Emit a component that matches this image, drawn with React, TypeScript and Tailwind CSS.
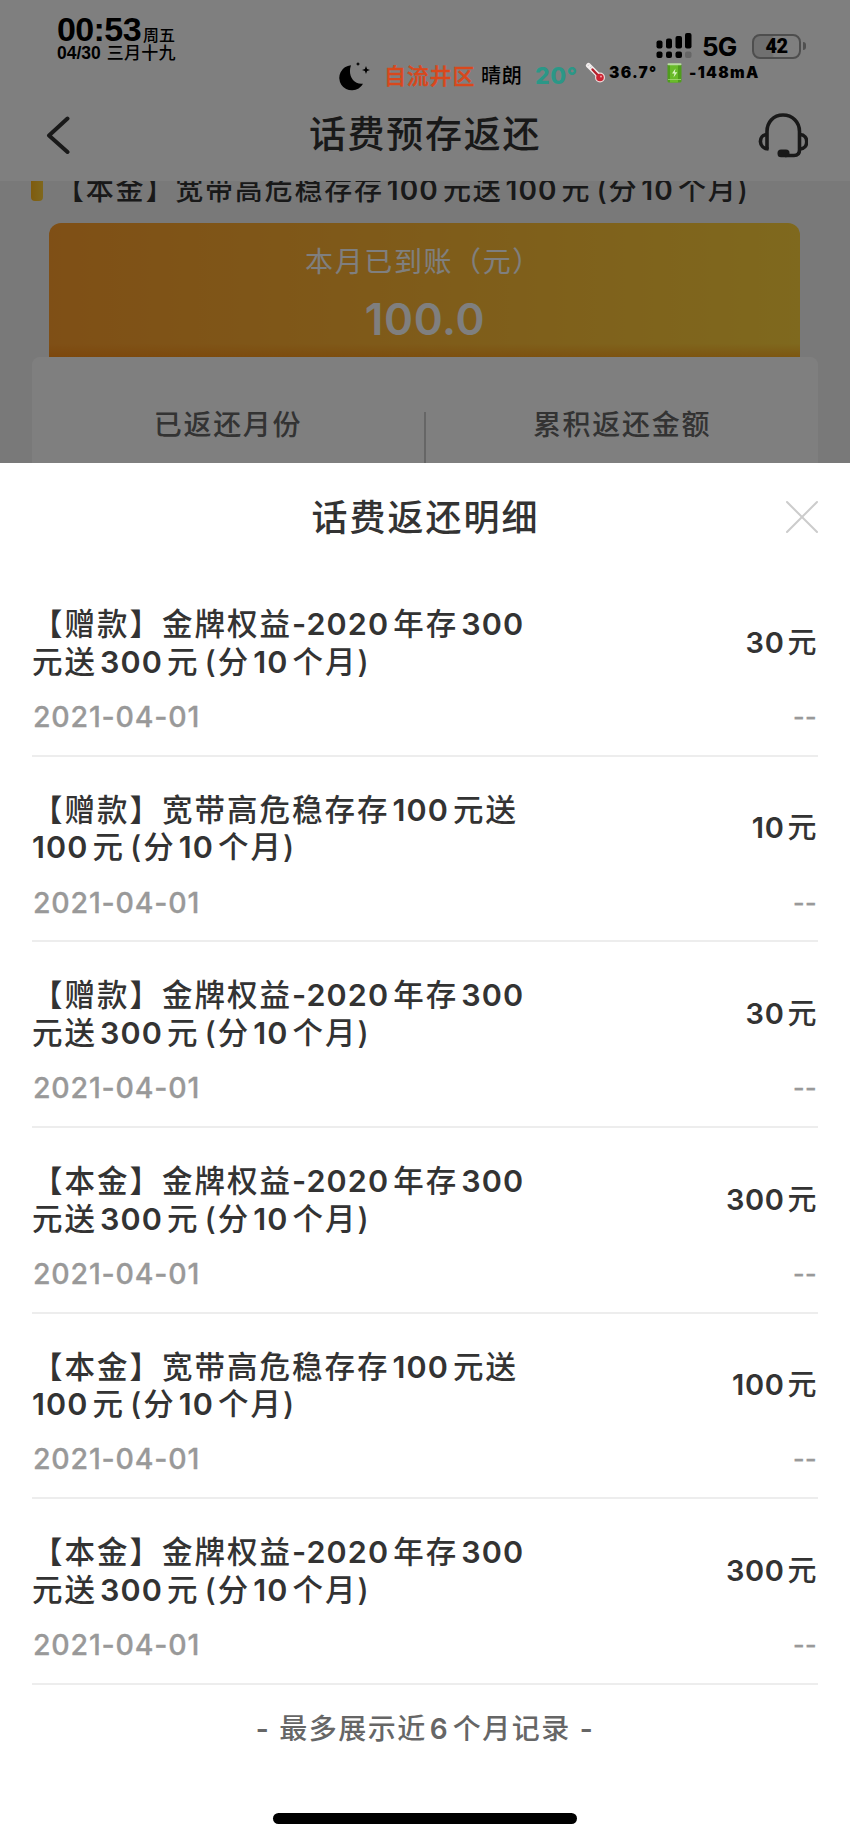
import type React from "react";

type RefundItem = {
  title: [string, string];
  date: string;
  amount: string;
};

const GIFT_300: [string, string] = ["【赠款】金牌权益-2020年存300", "元送300元(分10个月)"];
const BASE_300: [string, string] = ["【本金】金牌权益-2020年存300", "元送300元(分10个月)"];

const ITEMS: RefundItem[] = [
  { title: GIFT_300, date: "2021-04-01", amount: "30" },
  { title: ["【赠款】宽带高危稳存存100元送", "100元(分10个月)"], date: "2021-04-01", amount: "10" },
  { title: GIFT_300, date: "2021-04-01", amount: "30" },
  { title: BASE_300, date: "2021-04-01", amount: "300" },
  { title: ["【本金】宽带高危稳存存100元送", "100元(分10个月)"], date: "2021-04-01", amount: "100" },
  { title: BASE_300, date: "2021-04-01", amount: "300" },
];

// puts a little air between latin digits and the chinese characters around them
function Mixed({ text }: { text: string }): React.ReactElement {
  const parts = text.split(/(-?[0-9]+|\()/).filter(Boolean);
  return (
    <>
      {parts.map((p, i) => {
        if (p === "(") return <span key={i} className="ml-[5px]">{p}</span>;
        if (!/[0-9]/.test(p)) return <span key={i}>{p}</span>;
        const gap = i > 0 && !p.startsWith("-");
        return (
          <span key={i} className={`mr-[4px] font-semibold tracking-[1.100px] ${gap ? "ml-[3px]" : ""}`}>
            {p}
          </span>
        );
      })}
    </>
  );
}

function SignalIcon() {
  return (
    <svg width="36" height="26" viewBox="0 0 36 26">
      <rect x="0.5" y="7.5" width="6" height="8" rx="2" />
      <rect x="10" y="5.5" width="6" height="10" rx="2" />
      <rect x="19.5" y="3" width="6.5" height="12.5" rx="2" />
      <rect x="29" y="0" width="6.5" height="15.5" rx="2" />
      <rect x="0.5" y="18.5" width="6" height="6.5" rx="2" />
      <rect x="10" y="18.5" width="6" height="6.5" rx="2" />
      <rect x="19.5" y="18.5" width="6.5" height="6.5" rx="2" />
      <rect x="29" y="18.5" width="6.5" height="6.5" rx="2" fill="#666" />
    </svg>
  );
}

function MoonIcon() {
  return (
    <svg width="31" height="29" viewBox="0 0 31 29">
      <path d="M12 3.2A12.6 12.6 0 1 0 24 21.7C14 23 8.500 12.500 12 3.200Z" />
      <path d="M27 4 L28.100 6.900 L31 8 L28.100 9.100 L27 12 L25.900 9.100 L23 8 L25.900 6.900Z" />
      <path d="M19 0 L19.700 1.300 L21 2 L19.700 2.700 L19 4 L18.300 2.700 L17 2 L18.300 1.300Z" />
    </svg>
  );
}

function ThermometerIcon() {
  return (
    <svg width="21" height="21" viewBox="0 0 21 21">
      <path d="M3.500 3.500 L14 14" stroke="#f3eeee" strokeWidth="5" strokeLinecap="round" />
      <circle cx="15" cy="15.500" r="5" fill="#f1dada" />
      <path d="M7.500 7.500 L14 14.500" stroke="#b3202c" strokeWidth="2.400" strokeLinecap="round" />
      <circle cx="15" cy="15.500" r="3.800" fill="#cc2433" />
      <circle cx="16" cy="14.500" r="1" fill="#f4a0a5" />
      <path d="M4 2.500 L2.800 4 M6.400 4.600 L5.200 6" stroke="#bbb" strokeWidth="0.8" />
    </svg>
  );
}

function BatteryEmoji() {
  return (
    <svg width="15" height="20" viewBox="0 0 15 20">
      <rect x="0.500" y="1" width="14" height="18.500" rx="1.500" fill="#4f9d1c" />
      <rect x="3" y="1" width="8" height="18.500" fill="#69bb2a" />
      <rect x="0.500" y="0.300" width="14" height="2" rx="1" fill="#b9dca0" />
      <path d="M1 16.500 H14" stroke="#a6d977" strokeWidth="0.800" />
      <path d="M8.500 5.500 L5 10.500 H7.500 L6.500 14.500 L10.300 9.300 H7.800Z" fill="#dcf5c6" />
    </svg>
  );
}

function StatusBar() {
  return (
    <div className="relative z-10 h-[90px] text-black">
      <div className="flex h-[62px] items-start justify-between pl-[57px] pr-[44px]">
        <div className="pt-[14px]">
          <div className="flex h-[30px] items-baseline leading-[30px]">
            <span className="font-['Liberation_Sans'] text-[34px] font-bold tracking-[-0.600px]">00:53</span>
            <span className="ml-[2px] text-[16px] leading-[20px] font-medium">周五</span>
          </div>
          <div className="flex items-baseline gap-[6px] leading-[18px] font-medium">
            <span className="font-['Liberation_Sans'] text-[17.500px] font-bold">04/30</span>
            <span className="text-[17px] tracking-[0.200px]">三月十九</span>
          </div>
        </div>
        <div className="flex items-center pt-[31px]">
          <SignalIcon />
          <span className="mt-[2px] ml-[10px] w-[37px] text-[26px] leading-[28px] font-bold tracking-[-0.800px]">5G</span>
          <span className="ml-[13px] flex h-[25px] w-[49px] items-center justify-center rounded-[8px] border-2 border-[#4e4e4e] bg-gradient-to-r from-[#707070] from-40% to-[#7f7f7f] to-45%">
            <span className="font-['Roboto'] text-[20px] leading-none font-black tracking-[-0.500px]">42</span>
          </span>
          <span className="ml-[2px] h-[8px] w-[3px] rounded-r-full bg-[#505050]" />
        </div>
      </div>
      <div className="flex h-[28px] items-center pl-[339px] whitespace-nowrap">
        <MoonIcon />
        <span className="ml-[14px] w-[91px] text-[22px] font-medium tracking-[0.800px] text-[#d9481c] [-webkit-text-stroke:0.4px_#d9481c]">自流井区</span>
        <span className="ml-[6px] w-[42px] text-[20px] font-medium tracking-[0.800px]">晴朗</span>
        <span className="ml-[12px] w-[42px] text-[23px] font-extrabold tracking-[0.500px] text-[#2b9787]">20°</span>
        <div className="ml-[8px] flex items-center pb-[7px] text-[15.500px] font-black tracking-[1.300px]">
          <ThermometerIcon />
          <span className="ml-[3px] w-[51px]">36.7°</span>
          <span className="ml-[7px]"><BatteryEmoji /></span>
          <span className="ml-[7px]">-148mA</span>
        </div>
      </div>
    </div>
  );
}

function NavBar() {
  return (
    <div className="flex h-[91px] items-center justify-between bg-white pr-[42px] pb-[2px] pl-[46px] text-[#333]">
      <svg width="25" height="38" viewBox="0 0 25 38" fill="none" stroke="currentColor" strokeWidth="4" strokeLinecap="round" strokeLinejoin="round">
        <path d="M21.500 2.500 L3 19.500 L21.500 36" />
      </svg>
      <span className="ml-[21px] text-[37px] font-medium tracking-[1.700px]">话费预存返还</span>
      <svg width="50" height="46" viewBox="0 0 50 46" fill="none" stroke="currentColor" strokeWidth="3.600">
        <path d="M9 37.500 V19.500 C9 10 15.500 3 25 3 S41.500 10 41.500 19.500 V38 Q41.500 43.500 36 43.500 H27" />
        <path d="M9 22.500 C0 23 0 36.500 10.500 37" />
        <path d="M42 22.500 C51 23 51 36.500 42 37" />
        <rect x="19.500" y="37.500" width="12" height="7.700" rx="3.500" fill="currentColor" stroke="none" />
      </svg>
    </div>
  );
}

function AccountPage() {
  return (
    <div className="relative h-[463px] overflow-hidden bg-white">
      <StatusBar />
      <NavBar />
      <div className="h-[282px] bg-[#f3f3f3]">
        <div className="flex h-[42px] items-start overflow-hidden pl-[31px]">
          <span className="h-[20px] w-[12px] rounded-b-[4px] bg-gradient-to-r from-[#ffb81c] to-[#ffd03a]" />
          <span className="-mt-[11px] ml-[13px] text-[28px] leading-[40px] font-medium tracking-[1.800px] whitespace-nowrap text-[#333]">
            <Mixed text="【本金】宽带高危稳存存100元送100元(分10个月)" />
          </span>
        </div>
        <div className="mx-[49px] h-[134px] w-[751px] rounded-t-[12px] bg-gradient-to-r from-[#ff9f2c] via-[#ffb834] to-[#ffd23c] text-white">
          <div className="flex h-full flex-col items-center rounded-t-[12px] bg-gradient-to-t from-[#f07800]/40 to-transparent to-10% pt-[19px] pr-[16px]">
            <span className="pl-[14px] text-[28px] leading-[40px] tracking-[1.600px]">本月已到账（元）</span>
            <span className="mt-[12px] pl-[17px] text-[44px] leading-[50px] font-semibold tracking-[0.600px]">100.0</span>
          </div>
        </div>
        <div className="mx-[32px] flex h-[106px] items-start rounded-t-[8px] bg-white text-[28px] leading-[40px] font-medium text-[#666]">
          <span className="mt-[48px] w-[392px] text-center tracking-[1.700px]">已返还月份</span>
          <span className="mt-[55px] h-[51px] w-[2px] bg-[#ccc]" />
          <span className="mt-[48px] w-[392px] text-center tracking-[1.700px]">累积返还金额</span>
        </div>
      </div>
      <div className="absolute inset-0 bg-black/50" />
    </div>
  );
}

function RefundRow({ item }: { item: RefundItem }) {
  return (
    <li className="flex h-[185.650px] flex-col border-b-2 border-[#ededed] pt-[34px] text-[30.500px] font-medium text-[#333]">
      <div className="flex items-center justify-between">
        <div className="leading-[37.700px] tracking-[2px] whitespace-nowrap">
          {item.title.map((line) => (
            <div key={line}>
              <Mixed text={line} />
            </div>
          ))}
        </div>
        <div className="pr-px text-[29px] leading-[38px] tracking-[0.600px]">
          <span className="mr-[3px] font-semibold">{item.amount}</span>元
        </div>
      </div>
      <div className="mt-[17.500px] flex items-center justify-between text-[28.500px] leading-[38px] text-[#999]">
        <span className="pl-px tracking-[0.800px] [-webkit-text-stroke:0.3px_#999]">{item.date}</span>
        <span className="pr-px text-[25px] tracking-[0.500px] [-webkit-text-stroke:0.3px_#999]">--</span>
      </div>
    </li>
  );
}

function DetailSheet() {
  return (
    <div className="flex h-[1377px] flex-col items-center bg-white">
      <div className="flex h-[108px] w-full items-center justify-between pr-[31px] pl-[66px] text-[#333]">
        <span />
        <span className="pt-[2px] text-[36px] font-medium tracking-[2px]">话费返还明细</span>
        <svg width="34" height="34" viewBox="0 0 34 34" stroke="#ccc" strokeWidth="2" strokeLinecap="round">
          <path d="M2 2 L32 32 M32 2 L2 32" />
        </svg>
      </div>
      <ul className="w-[786px]">
        {ITEMS.map((item, i) => (
          <RefundRow key={i} item={item} />
        ))}
      </ul>
      <p className="mt-[24px] text-[28px] leading-[40px] font-medium tracking-[1.500px] text-[#666]">
        <span className="font-semibold">-</span> <Mixed text="最多展示近6个月记录" />{" "}
        <span className="font-semibold">-</span>
      </p>
      <div className="mt-auto mb-[16px] h-[11px] w-[304px] rounded-full bg-black" />
    </div>
  );
}

export default function App(): React.ReactElement {
  return (
    <div className="w-[850px] bg-white font-['Inter','Noto_Sans_CJK_SC',sans-serif]">
      <AccountPage />
      <DetailSheet />
    </div>
  );
}
